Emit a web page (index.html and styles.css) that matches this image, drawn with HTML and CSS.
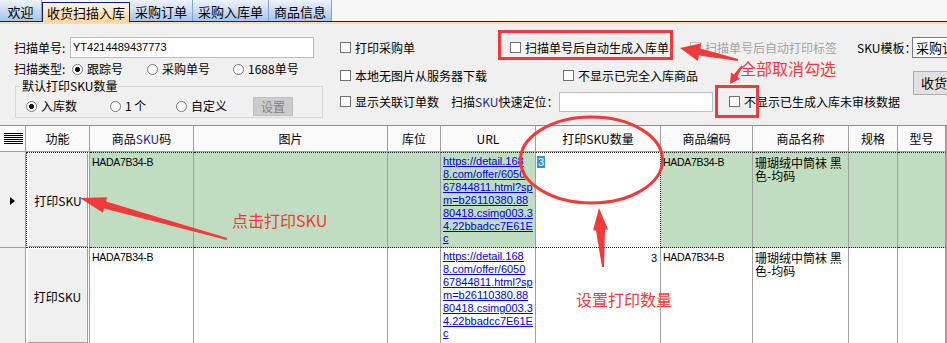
FILE: index.html
```html
<!DOCTYPE html>
<html lang="zh-CN">
<head>
<meta charset="utf-8">
<title>收货扫描入库</title>
<link rel="stylesheet" href="styles.css">
</head>
<body>
<div class="tabs">
  <div class="tab t-welcome">欢迎</div>
  <div class="tab t-scan active">收货扫描入库</div>
  <div class="tab t-order">采购订单</div>
  <div class="tab t-inbound">采购入库单</div>
  <div class="tab t-goods">商品信息</div>
</div>
<div class="tab-strip"></div>

<div class="form">
  <div class="left">
    <div class="field-row scan-row">
      <span class="lbl scan-lbl">扫描单号:</span>
      <div class="textbox scan-box">YT4214489437773</div>
    </div>
    <div class="field-row type-row">
      <span class="lbl type-lbl">扫描类型:</span>
      <span class="radio w75"><span class="rb on"></span>跟踪号</span>
      <span class="radio w86"><span class="rb"></span>采购单号</span>
      <span class="radio"><span class="rb"></span>1688单号</span>
    </div>
    <fieldset class="group">
      <legend>默认打印SKU数量</legend>
      <div class="group-row">
        <span class="radio w84"><span class="rb on"></span>入库数</span>
        <span class="radio w66"><span class="rb"></span>1 个</span>
        <span class="radio w77"><span class="rb"></span>自定义</span>
        <span class="btn-disabled">设置</span>
      </div>
    </fieldset>
  </div>

  <div class="right">
    <div class="opt-row row1">
      <span class="chk w170"><span class="box"></span>打印采购单</span>
      <span class="chk w180"><span class="box"></span>扫描单号后自动生成入库单</span>
      <span class="chk disabled w167"><span class="box"></span>扫描单号后自动打印标签</span>
      <span class="lbl w55">SKU模板：</span>
      <div class="combo">采购订单</div>
    </div>
    <div class="opt-row row2">
      <span class="chk w223"><span class="box"></span>本地无图片从服务器下载</span>
      <span class="chk w350"><span class="box"></span>不显示已完全入库商品</span>
      <div class="btn receive">收货订单</div>
    </div>
    <div class="opt-row row3">
      <span class="chk w111"><span class="box"></span>显示关联订单数</span>
      <span class="lbl w108">扫描<span class="sku">SKU</span>快速定位：</span>
      <div class="textbox locate"></div>
      <span class="chk locate-chk"><span class="box"></span>不显示已生成入库未审核数据</span>
    </div>
  </div>
</div>

<div class="grid">
  <div class="th sel-h">
    <svg width="19" height="11" viewBox="0 0 19 11"><g stroke="#000" stroke-width="1"><line x1="0" y1="0.5" x2="19" y2="0.5"/><line x1="0" y1="2.5" x2="19" y2="2.5"/><line x1="0" y1="4.5" x2="19" y2="4.5"/><line x1="0" y1="6.5" x2="19" y2="6.5"/><line x1="0" y1="8.5" x2="19" y2="8.5"/><line x1="0" y1="10.5" x2="19" y2="10.5"/></g></svg>
  </div>
  <div class="th">功能</div>
  <div class="th">商品<span class="sku">SKU</span>码</div>
  <div class="th">图片</div>
  <div class="th">库位</div>
  <div class="th th-url">URL</div>
  <div class="th">打印SKU数量</div>
  <div class="th">商品编码</div>
  <div class="th">商品名称</div>
  <div class="th">规格</div>
  <div class="th">型号</div>

  <div class="td sel cur-sel"><span class="row-arrow"></span></div>
  <div class="td fn hl fn-first"><div class="btn-cell">打印SKU</div></div>
  <div class="td code hl">HADA7B34-B</div>
  <div class="td hl"></div>
  <div class="td hl"></div>
  <div class="td url hl"><span class="link">https://detail.168<br>8.com/offer/6050<br>67844811.html?sp<br>m=b26110380.88<br>80418.csimg003.3<br>4.22bbadcc7E61E<br>c</span></div>
  <div class="td qty hl editing"><span class="sel-text">3</span></div>
  <div class="td code hl">HADA7B34-B</div>
  <div class="td name hl">珊瑚绒中筒袜 黑色-均码</div>
  <div class="td hl"></div>
  <div class="td hl"></div>

  <div class="td sel"></div>
  <div class="td fn"><div class="btn-cell">打印SKU</div></div>
  <div class="td code">HADA7B34-B</div>
  <div class="td"></div>
  <div class="td"></div>
  <div class="td url"><span class="link">https://detail.168<br>8.com/offer/6050<br>67844811.html?sp<br>m=b26110380.88<br>80418.csimg003.3<br>4.22bbadcc7E61E<br>c</span></div>
  <div class="td qty num">3</div>
  <div class="td code">HADA7B34-B</div>
  <div class="td name">珊瑚绒中筒袜 黑色-均码</div>
  <div class="td"></div>
  <div class="td"></div>
</div>

<svg class="annot" width="947" height="343" viewBox="0 0 947 343">
  <g fill="none" stroke="#f23a3a" stroke-width="3">
    <rect x="499.5" y="31.5" width="172" height="27"/>
    <rect x="716.5" y="86.5" width="41" height="30"/>
    <ellipse cx="591.5" cy="160" rx="71" ry="43"/>
  </g>
  <g fill="#f23a3a">
    <polygon points="680,48 701.4,43.2 700.3,48.6 738.2,59 737.8,61 698.9,55.5 697.8,60.9"/>
    <polygon points="730,84 731,72.6 733.9,74.6 741.3,65.6 742.7,66.4 737.2,76.8 740.1,78.7"/>
    <polygon points="80,198 107.2,197.3 106,201.6 227.3,238 226.7,240 104.1,208.4 102.9,212.7"/>
    <polygon points="599,208 608,229.4 605,229.7 604,267 602,267.1 596,230.3 593,230.5"/>
  </g>
</svg>
<div class="note note-uncheck">全部取消勾选</div>
<div class="note note-click">点击打印SKU</div>
<div class="note note-qty">设置打印数量</div>
</body>
</html>
```

FILE: styles.css
```css
* { box-sizing: border-box; }
html, body { margin: 0; padding: 0; }
body {
  width: 947px;
  height: 343px;
  overflow: hidden;
  position: relative;
  background: #f0f0f0;
  font-family: "Noto Sans CJK SC", "Liberation Sans", sans-serif;
  font-size: 12px;
  color: #000;
}

/* ---------- tabs ---------- */
.tabs {
  display: flex;
  height: 22px;
  border-bottom: 1px solid #0b1f8f;
  background: #f7f7f7;
}
.tab {
  flex: none;
  height: 21px;
  padding-top: 3px;
  line-height: 17px;
  text-align: center;
  font-size: 13px;
  background: linear-gradient(#eef3fc, #a9c3ea);
  border-right: 1px solid #8aa2c9;
}
.t-welcome { width: 42px; }
.t-scan { width: 88px; }
.t-order { width: 63px; }
.t-inbound { width: 76px; }
.t-goods { width: 63px; }
.tab.active {
  align-self: flex-start;
  margin-top: 2px;
  height: 20px;
  padding-top: 0;
  line-height: 19px;
  background: linear-gradient(#fff7ec, #ffd49c);
  border: 1px solid #0b1f8f;
  border-bottom: none;
}
.tab-strip { height: 2px; background: #fedcb0; }

/* ---------- form ---------- */
.form { display: flex; height: 101px; }
.left { width: 340px; flex: none; padding: 13px 0 0 14px; }
.right { flex: 1; min-width: 0; padding-top: 13px; overflow: hidden; }

.field-row { display: flex; align-items: center; }
.scan-row { height: 21px; }
.type-row { height: 16px; margin-top: 3px; }
.lbl { flex: none; line-height: 16px; white-space: nowrap; }
.scan-lbl { width: 56px; }
.type-lbl { width: 58px; }
.textbox {
  background: #fff;
  border: 1px solid #bcbcbc;
}
.scan-box {
  width: 244px;
  height: 21px;
  padding-left: 2px;
  font: 11px/19px "Liberation Sans", sans-serif;
}

.radio { display: flex; align-items: center; flex: none; line-height: 16px; white-space: nowrap; }
.rb {
  width: 11px;
  height: 11px;
  border: 1px solid #777;
  border-radius: 50%;
  background: #fff;
  margin-right: 4px;
  flex: none;
}
.rb.on { background: radial-gradient(circle, #111 2.2px, #fff 2.8px); }
.w66 { width: 66px; }
.w75 { width: 75px; }
.w77 { width: 77px; }
.w84 { width: 84px; }
.w86 { width: 86px; }

.group {
  margin: 2px 0 0 1px;
  width: 308px;
  padding: 0;
  border: 1px solid #d6d6d6;
}
.group legend {
  margin-left: 5px;
  padding: 0 1px;
  font-size: 12px;
  line-height: 14px;
}
.group-row {
  display: flex;
  align-items: center;
  height: 20px;
  margin: 3px 0 1px;
  padding-left: 10px;
}
.btn-disabled {
  width: 40px;
  height: 19px;
  background: #cccccc;
  border: 1px solid #bfbfbf;
  color: #838383;
  text-align: center;
  line-height: 17px;
  font-size: 12px;
}

.opt-row { display: flex; align-items: center; height: 21px; white-space: nowrap; }
.row2 { margin-top: 7px; }
.row3 { margin-top: 5px; }
.chk { display: flex; align-items: center; flex: none; line-height: 16px; }
.box {
  width: 11px;
  height: 11px;
  border: 1px solid #707070;
  background: #fff;
  margin-right: 4px;
  flex: none;
}
.chk.disabled { color: #a3a3a3; }
.chk.disabled .box { border-color: #bdbdbd; background: #f4f4f4; }
.w55 { width: 55px; }
.w108 { width: 108px; }
.w111 { width: 111px; }
.w167 { width: 167px; }
.w170 { width: 170px; }
.w180 { width: 180px; }
.w223 { width: 223px; }
.w350 { width: 350px; }
.combo {
  flex: none;
  width: 80px;
  height: 21px;
  background: #fff;
  border: 1px solid #7a7a7a;
  padding-left: 3px;
  font-size: 13px;
  line-height: 19px;
}
.btn.receive {
  flex: none;
  align-self: flex-start;
  margin-top: 6px;
  width: 70px;
  height: 24px;
  background: #e1e1e1;
  border: 1px solid #adadad;
  padding-left: 7px;
  font-size: 13px;
  line-height: 22px;
}
.locate { width: 154px; height: 20px; flex: none; }
.locate-chk { margin-left: 16px; font-size: 12px; }
.sku { color: #1c2a86; }

/* ---------- grid ---------- */
.grid {
  display: grid;
  grid-template-columns: 26px 64px 104px 194px 53px 95px 125px 92px 96px 49px 48px;
  grid-template-rows: 26px 96px 96px;
  border-top: 1px solid #8c8c8c;
  background: #a0a0a0;
  width: 947px;
}
.th {
  display: flex;
  align-items: center;
  justify-content: center;
  background: #fbfbfb;
  border-right: 1px solid #a0a0a0;
  border-bottom: 1px solid #a0a0a0;
  padding-top: 1px;
  font-size: 12px;
  line-height: 14px;
  white-space: nowrap;
}
.sel-h { justify-content: flex-start; padding: 0 0 0 4px; }
.sel-h svg { display: block; }
.td {
  background: #fff;
  border-right: 1px solid #a0a0a0;
  border-bottom: 1px solid #a0a0a0;
  overflow: hidden;
}
.td.sel {
  background: #f0f0f0;
  display: flex;
  align-items: center;
  padding-left: 10px;
}
.cur-sel { border-top: 1px solid #f0f0f0; }
.row-arrow {
  width: 0;
  height: 0;
  border-left: 5px solid #000;
  border-top: 4px solid transparent;
  border-bottom: 4px solid transparent;
  margin-top: 2px;
}
.td.hl {
  background: #c1ddc1;
  border-top: 1px dotted #222;
  border-bottom: 1px dotted #222;
}
.td.fn { background: #fff; padding: 0 1px; }
.fn-first { border-left: 1px dotted #222; }
.btn-cell {
  height: 100%;
  background: #f0f0f0;
  border: 1px solid;
  border-color: #fff #a0a0a0 #a0a0a0 #fff;
  display: flex;
  align-items: center;
  justify-content: center;
  font-size: 12px;
  line-height: 14px;
  padding-top: 2px;
}
.td.code {
  padding: 3px 0 0 2px;
  font: 10.5px/13px "Liberation Sans", sans-serif;
  letter-spacing: -0.3px;
  white-space: nowrap;
}
.td.url {
  padding: 2px 0 0 2px;
  font: 11px/12.9px "Liberation Sans", sans-serif;
  white-space: nowrap;
}
.link { color: #0000ee; text-decoration: underline; }
.td.qty { font: 11px/12px "Liberation Sans", sans-serif; }
.td.qty.editing { background: #fff; border-right: 1px dotted #222; padding: 3px 0 0 1px; }
.sel-text { background: #3390f0; color: #fff; padding: 0 1px; }
.td.qty.num { text-align: right; padding: 4px 3px 0 0; }
.td.name {
  padding: 3px 0 0 2px;
  font-size: 12px;
  line-height: 13px;
}

/* ---------- annotations ---------- */
.annot { position: absolute; left: 0; top: 0; pointer-events: none; }
.note {
  position: absolute;
  color: #f23a3a;
  font-size: 16px;
  line-height: 18px;
  white-space: nowrap;
}
.note-uncheck { left: 740px; top: 59px; }
.note-click { left: 232px; top: 211px; }
.note-qty { left: 576px; top: 290px; }
```
